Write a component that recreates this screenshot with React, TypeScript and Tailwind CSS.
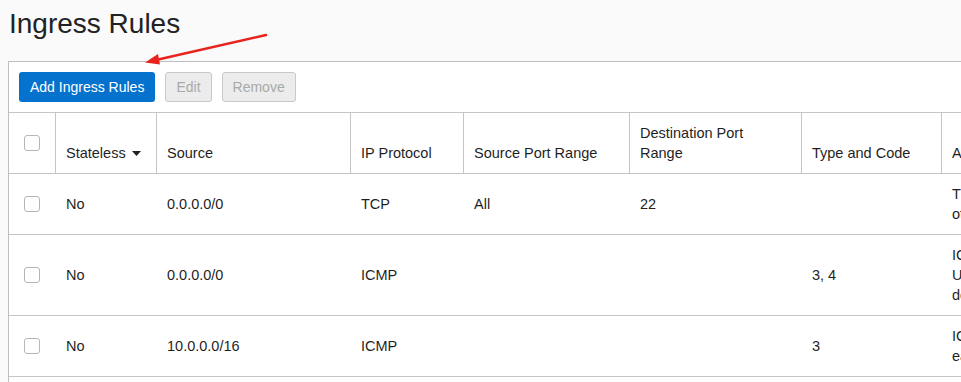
import React from "react"

const rules = [
  {
    stateless: "No",
    source: "0.0.0.0/0",
    protocol: "TCP",
    srcPort: "All",
    dstPort: "22",
    typeCode: "",
    allows: ["TCP traffic for ports: 22 SSH Remote Login Protocol", "other hosts"],
  },
  {
    stateless: "No",
    source: "0.0.0.0/0",
    protocol: "ICMP",
    srcPort: "",
    dstPort: "",
    typeCode: "3, 4",
    allows: [
      "ICMP traffic for: 3, 4 Destination",
      "Unreachable: Fragmentation Needed and",
      "don't Fragment was Set",
    ],
  },
  {
    stateless: "No",
    source: "10.0.0.0/16",
    protocol: "ICMP",
    srcPort: "",
    dstPort: "",
    typeCode: "3",
    allows: ["ICMP traffic for: 3 Destination Unreachable", "each host"],
  },
]

const cols = "grid grid-cols-[46px_101px_194px_113px_166px_172px_140px_420px]"

function Checkbox() {
  return (
    <span className="block w-4 h-4 rounded-[3px] border border-[#b4b6ba] bg-white" />
  )
}

function Th({ children }: { children?: React.ReactNode }) {
  return (
    <div className="flex items-end border-l border-[#c3c5c9] pl-[10px] pr-2 py-[10px]">
      <div>{children}</div>
    </div>
  )
}

function Td({ children }: { children?: React.ReactNode }) {
  return (
    <div className="flex items-center pl-[11px] pr-2 py-[10px]">
      <div>{children}</div>
    </div>
  )
}

export default function App() {
  return (
    <div className="relative w-[961px] h-[382px] overflow-hidden bg-[#fafafa] text-[#1f1f1f] font-['Liberation_Sans',Arial,sans-serif]">
      {/* TITLE */}
      <h1 className="pl-[9px] pt-[8px] text-[28px] leading-[32px] text-[#222]">
        Ingress Rules
      </h1>

      {/* PANEL */}
      <div className="mt-[21px] ml-[8px] w-[1400px] min-h-[340px] border-l border-t border-[#bcbec2] bg-white text-[14.5px] leading-[20px]">
        <div className="flex gap-[10px] p-[10px] text-[14px] leading-[18px]">
          <button className="h-[30px] px-[11px] pb-px rounded-[3px] bg-[#0572ce] text-white">
            Add Ingress Rules
          </button>
          <button className="h-[30px] px-[10px] pb-px rounded-[3px] border border-[#c8c9cc] bg-[#ececec] text-[#a9a9a9]">
            Edit
          </button>
          <button className="h-[30px] px-[10px] pb-px rounded-[3px] border border-[#c8c9cc] bg-[#ececec] text-[#a9a9a9]">
            Remove
          </button>
        </div>

        {/* HEADER */}
        <div className={`${cols} border-t border-b border-[#c3c5c9] h-[62px]`}>
          <div className="flex items-center justify-center">
            <Checkbox />
          </div>
          <Th>
            <span className="flex items-center gap-[6px]">
              Stateless
              <svg width="9" height="5" viewBox="0 0 9 5">
                <path d="M0 0 L9 0 L4.5 5 Z" fill="#222" />
              </svg>
            </span>
          </Th>
          <Th>Source</Th>
          <Th>IP Protocol</Th>
          <Th>Source Port Range</Th>
          <Th>
            Destination Port
            <br />
            Range
          </Th>
          <Th>Type and Code</Th>
          <Th>Allows</Th>
        </div>

        {/* ROWS */}
        {rules.map((r, i) => (
          <div key={i} className={`${cols} border-b border-[#c3c5c9]`}>
            <div className="flex items-center justify-center">
              <Checkbox />
            </div>
            <Td>{r.stateless}</Td>
            <Td>{r.source}</Td>
            <Td>{r.protocol}</Td>
            <Td>{r.srcPort}</Td>
            <Td>{r.dstPort}</Td>
            <Td>{r.typeCode}</Td>
            <div className="flex items-center pl-[11px] py-[10px] whitespace-nowrap">
              <div>
                {r.allows.map((line, j) => (
                  <div key={j}>{line}</div>
                ))}
              </div>
            </div>
          </div>
        ))}
      </div>

      {/* ARROW */}
      <svg
        className="absolute left-0 top-0 pointer-events-none"
        width="961"
        height="382"
      >
        <line x1="266" y1="35" x2="156" y2="60" stroke="#e8231d" strokeWidth="2.5" strokeLinecap="round" />
        <path d="M145 62.5 L158 54 L160 64.5 Z" fill="#e8231d" />
      </svg>
    </div>
  )
}
